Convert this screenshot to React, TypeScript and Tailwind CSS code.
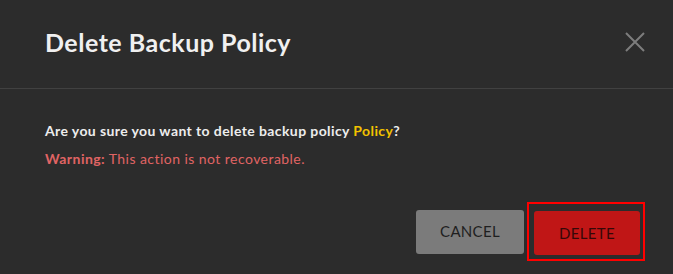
export default function App() {
  return (
    <div
      className="w-[673px] h-[274px] bg-[#2c2c2c] flex flex-col overflow-hidden"
      style={{ fontFamily: 'Lato, "Noto Sans", sans-serif' }}
    >
      <header className="h-[89px] shrink-0 flex items-center justify-between pl-[45px] pr-[28px] border-b border-[#414141]">
        <h1 className="text-[25px] font-bold text-[#f0f0f0] tracking-[0.5px] mt-[-3px]">
          Delete Backup Policy
        </h1>
        <button className="w-[20px] h-[20px] mt-[-4px] text-[#7d7d7d]">
          <svg viewBox="0 0 20 20" width="20" height="20" fill="none" stroke="currentColor" strokeWidth="2">
            <path d="M1 1L19 19M19 1L1 19" />
          </svg>
        </button>
      </header>

      <div className="flex flex-col pl-[45px] pt-[33px] gap-[11px]">
        <p className="text-[14px] font-bold text-[#ededed] leading-[17px] tracking-[0.4px]">
          Are you sure you want to delete backup policy{' '}
          <span className="text-[#f2c200]">Policy</span>?
        </p>
        <p className="text-[14px] text-[#e06464] leading-[17px] tracking-[0.45px]">
          <span className="font-bold">Warning:</span> This action is not recoverable.
        </p>
      </div>

      <div className="flex justify-end items-center gap-[3px] pr-[28px] mt-[35px]">
        <button className="w-[108px] h-[44px] rounded-[3px] bg-[#7b7b7b] text-[#1f1f1f] text-[15px] tracking-[0.3px]">
          CANCEL
        </button>
        <div className="border-2 border-[#ff0000] pl-[5px] pr-[3px] pt-[7px] pb-[4px]">
          <button className="w-[106px] h-[44px] rounded-[3px] bg-[#c01616] text-[#350808] text-[15px] tracking-[0.3px]">
            DELETE
          </button>
        </div>
      </div>
    </div>
  )
}
